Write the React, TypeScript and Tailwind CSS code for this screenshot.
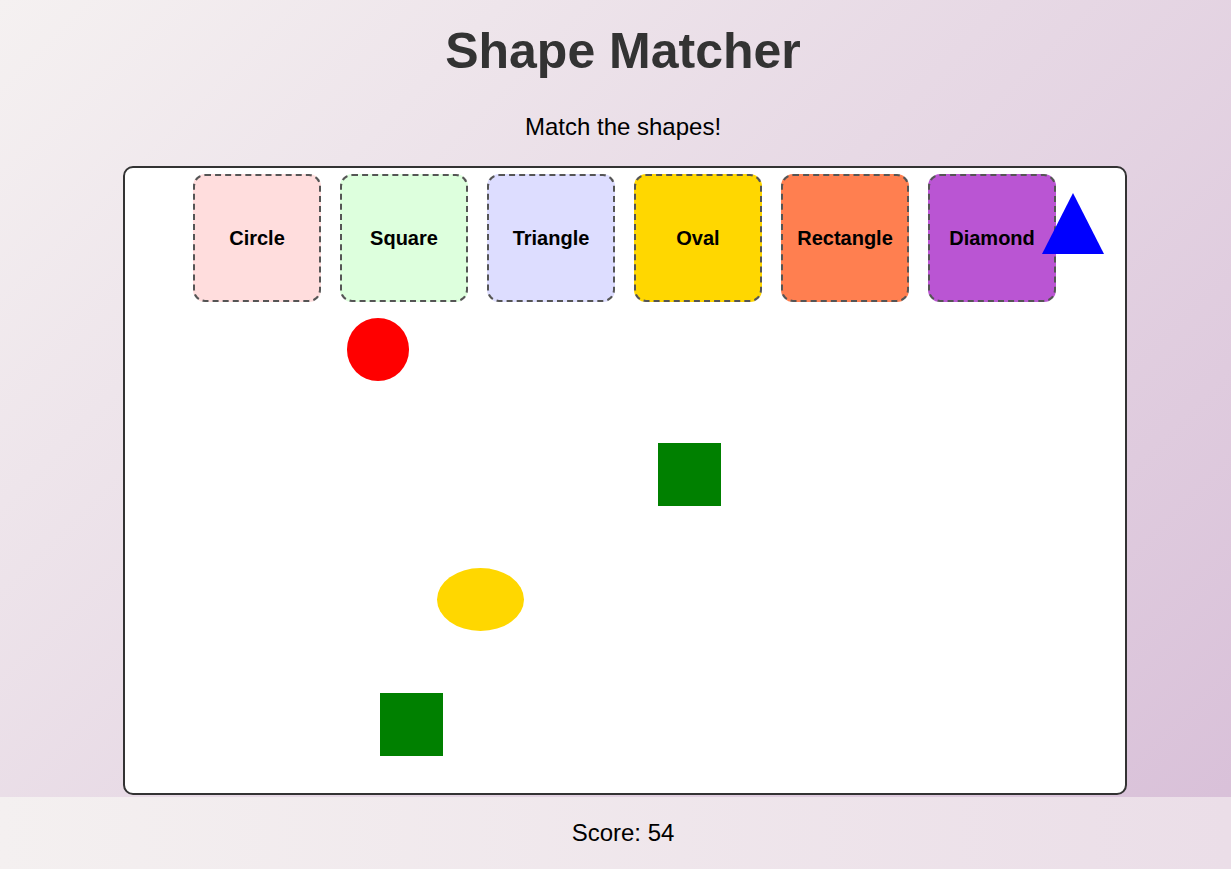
const targets = [
  { label: "Circle", bg: "bg-[#ffdddd]" },
  { label: "Square", bg: "bg-[#ddffdd]" },
  { label: "Triangle", bg: "bg-[#ddddff]" },
  { label: "Oval", bg: "bg-[#ffd700]" },
  { label: "Rectangle", bg: "bg-[#ff7f50]" },
  { label: "Diamond", bg: "bg-[#ba55d3]" },
];

// loose shapes sit at free spots on the board
function Shapes() {
  return (
    <>
      <div className="absolute left-[222px] top-[150px] w-[62px] h-[63px] rounded-full bg-[#ff0000]" />
      <div className="absolute left-[533px] top-[275px] w-[63px] h-[63px] bg-[#008000]" />
      <div className="absolute left-[312px] top-[400px] w-[87px] h-[63px] rounded-[50%] bg-[#ffd700]" />
      <div className="absolute left-[255px] top-[525px] w-[63px] h-[63px] bg-[#008000]" />
      <div className="absolute left-[917px] top-[25px] w-0 h-0 border-l-[31px] border-r-[31px] border-b-[61px] border-l-transparent border-r-transparent border-b-[#0000ff]" />
    </>
  );
}

export default function App() {
  return (
    <div className="h-[869px] overflow-hidden flex flex-col bg-[linear-gradient(135deg,#f5f1f1,#d8bfd8)] font-['Liberation_Sans',Arial,sans-serif]">
      <div className="flex-1">
        <div className="pl-[15px] text-center">
          <h1 className="pt-[22px] text-[50px] leading-[58px] font-bold text-[#333]">
            Shape Matcher
          </h1>
          <p className="mt-[33px] text-[24px] leading-[28px] text-black">
            Match the shapes!
          </p>
        </div>
        <div className="pl-[19px] mt-[25px]">
          <div className="relative mx-auto w-[1004px] h-[629px] bg-white border-2 border-[#333] rounded-[10px]">
            <div className="flex justify-center gap-[19px] pt-[6px] pr-[1px]">
              {targets.map((t) => (
                <div
                  key={t.label}
                  className={`w-[128px] h-[128px] flex items-center justify-center border-2 border-dashed border-[#555] rounded-[12px] ${t.bg}`}
                >
                  <span className="text-[20px] font-bold text-black">{t.label}</span>
                </div>
              ))}
            </div>
            <Shapes />
          </div>
        </div>
      </div>
      <footer className="h-[72px] pl-[15px] flex items-center justify-center bg-gradient-to-r from-[#f4f0f0] to-[#ebdee8]">
        <span className="text-[24px] leading-[28px] text-black">Score: 54</span>
      </footer>
    </div>
  );
}
